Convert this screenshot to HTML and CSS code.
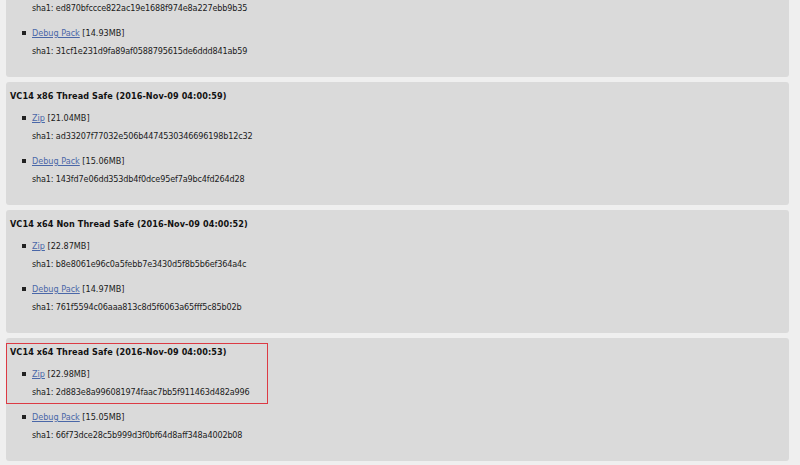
FILE: index.html
```html
<!DOCTYPE html>
<html lang="en">
<head>
  <meta charset="UTF-8" />
  <title>PHP for Windows: Binaries and sources Releases</title>
  <link rel="stylesheet" href="styles.css">
</head>
<body>
  <div class="releases">

    <div class="build">
      <div class="build-head">
        <h4>VC14 x86 Non Thread Safe (2016-Nov-09 04:00:51)</h4>
        <ul>
          <li>
            <a href="#">Zip</a> [20.96MB]
            <span class="sha">sha1: ed870bfccce822ac19e1688f974e8a227ebb9b35</span>
          </li>
        </ul>
      </div>
      <ul>
        <li>
          <a href="#">Debug Pack</a> [14.93MB]
          <span class="sha">sha1: 31cf1e231d9fa89af0588795615de6ddd841ab59</span>
        </li>
      </ul>
    </div>

    <div class="build">
      <div class="build-head">
        <h4>VC14 x86 Thread Safe (2016-Nov-09 04:00:59)</h4>
        <ul>
          <li>
            <a href="#">Zip</a> [21.04MB]
            <span class="sha">sha1: ad33207f77032e506b4474530346696198b12c32</span>
          </li>
        </ul>
      </div>
      <ul>
        <li>
          <a href="#">Debug Pack</a> [15.06MB]
          <span class="sha">sha1: 143fd7e06dd353db4f0dce95ef7a9bc4fd264d28</span>
        </li>
      </ul>
    </div>

    <div class="build">
      <div class="build-head">
        <h4>VC14 x64 Non Thread Safe (2016-Nov-09 04:00:52)</h4>
        <ul>
          <li>
            <a href="#">Zip</a> [22.87MB]
            <span class="sha">sha1: b8e8061e96c0a5febb7e3430d5f8b5b6ef364a4c</span>
          </li>
        </ul>
      </div>
      <ul>
        <li>
          <a href="#">Debug Pack</a> [14.97MB]
          <span class="sha">sha1: 761f5594c06aaa813c8d5f6063a65fff5c85b02b</span>
        </li>
      </ul>
    </div>

    <div class="build">
      <div class="build-head marked">
        <h4>VC14 x64 Thread Safe (2016-Nov-09 04:00:53)</h4>
        <ul>
          <li>
            <a href="#">Zip</a> [22.98MB]
            <span class="sha">sha1: 2d883e8a996081974faac7bb5f911463d482a996</span>
          </li>
        </ul>
      </div>
      <ul>
        <li>
          <a href="#">Debug Pack</a> [15.05MB]
          <span class="sha">sha1: 66f73dce28c5b999d3f0bf64d8aff348a4002b08</span>
        </li>
      </ul>
    </div>

  </div>
</body>
</html>
```

FILE: styles.css
```css
body {
  margin: 0;
  background: #efefef;
  font-family: 'DejaVu Sans Condensed', 'DejaVu Sans', sans-serif;
  font-size: 9px;
  color: #1a1a1a;
}
.releases {
  margin-top: -46px;
  padding: 0 11px 0 6px;
}
.build {
  background: #dadada;
  border-radius: 3px;
  height: 123px;
  box-sizing: border-box;
  padding-top: 5px;
  margin-bottom: 5px;
}
.build-head {
  width: 262px;
  box-sizing: border-box;
  border: 1px solid transparent;
  padding: 0 0 2px 3px;
  margin-bottom: 4px;
}
.build-head.marked {
  border-color: #dc3a44;
}
h4 {
  margin: 0;
  font-size: 9px;
  line-height: 16px;
  font-weight: bold;
  letter-spacing: 0.1px;
  color: #111;
}
ul {
  list-style: none;
  margin: 0;
  padding-left: 26px;
  line-height: 18px;
}
.build-head ul {
  padding-left: 22px;
  margin-top: 5px;
}
li {
  position: relative;
}
li::before {
  content: "";
  position: absolute;
  left: -10px;
  top: 7px;
  width: 4px;
  height: 4px;
  background: #222;
}
.sha {
  display: block;
  letter-spacing: -0.15px;
}
a {
  color: #4a67a8;
}
```
